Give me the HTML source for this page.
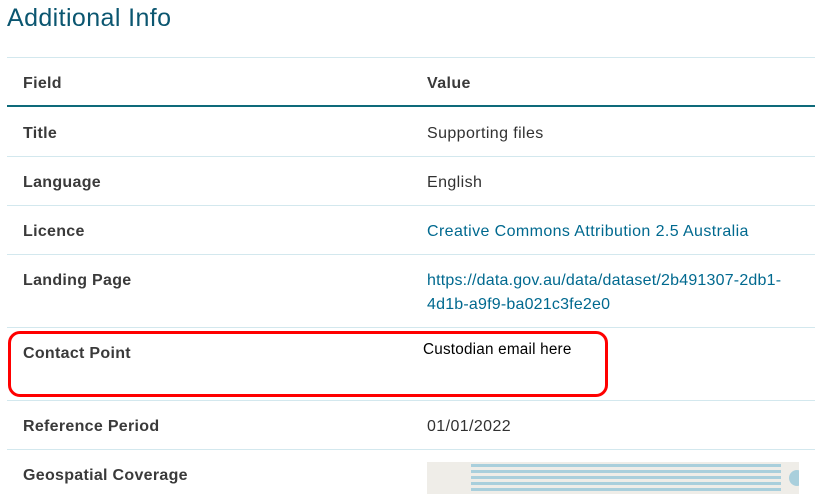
<!DOCTYPE html>
<html><head><style>
body{margin:0;width:826px;height:494px;overflow:hidden;background:#fff;font-family:"Liberation Sans",sans-serif;position:relative}
.h{position:absolute;left:7px;top:4px;font-size:25px;letter-spacing:0.4px;color:#0b5670}
.l{position:absolute;left:7px;width:808px;height:1px;background:#d3e8ee}
.t{position:absolute;font-size:16px;color:#313131;margin-top:2px}
.f{left:23px;font-weight:bold;color:#3a3a3a;letter-spacing:0.3px}
.v{left:427px;letter-spacing:0.4px}
.a{color:#00698f}
</style></head><body>
<div class="h">Additional Info</div>
<div class="l" style="top:57px"></div>
<div class="t f" style="top:73px">Field</div>
<div class="t v" style="top:73px;font-weight:bold;color:#3a3a3a">Value</div>
<div class="l" style="top:105px;height:2px;background:#0e6a7a"></div>
<div class="t f" style="top:123px">Title</div><div class="t v" style="top:123px">Supporting files</div>
<div class="l" style="top:156px"></div>
<div class="t f" style="top:172px">Language</div><div class="t v" style="top:172px">English</div>
<div class="l" style="top:205px"></div>
<div class="t f" style="top:221px">Licence</div><div class="t v a" style="top:221px">Creative Commons Attribution 2.5 Australia</div>
<div class="l" style="top:254px"></div>
<div class="t f" style="top:270px">Landing Page</div><div class="t v a" style="top:270px;line-height:24px;margin-top:-1px;letter-spacing:0.2px">https://data.gov.au/data/dataset/2b491307-2db1-<br>4d1b-a9f9-ba021c3fe2e0</div>
<div class="l" style="top:327px"></div>
<div class="t f" style="top:343px">Contact Point</div>
<div class="t" style="left:423px;top:339px;font-size:15.3px;color:#000;letter-spacing:0.2px">Custodian email here</div>
<div style="position:absolute;left:8px;top:331px;width:594px;height:60px;border:3px solid #f00;border-radius:12px"></div>
<div class="l" style="top:400px"></div>
<div class="t f" style="top:416px">Reference Period</div><div class="t v" style="top:416px">01/01/2022</div>
<div class="l" style="top:449px"></div>
<div class="t f" style="top:465px">Geospatial Coverage</div>
<div style="position:absolute;left:427px;top:462px;width:372px;height:32px;background:#efede8;overflow:hidden">
<div style="position:absolute;left:44px;top:2px;width:310px;height:30px;background:repeating-linear-gradient(#a9cfdc 0 3px,#efede8 3px 6px)"></div>
<div style="position:absolute;left:362px;top:8px;width:16px;height:16px;background:#a9cfdc;border-radius:50%"></div>
</div>
</body></html>
